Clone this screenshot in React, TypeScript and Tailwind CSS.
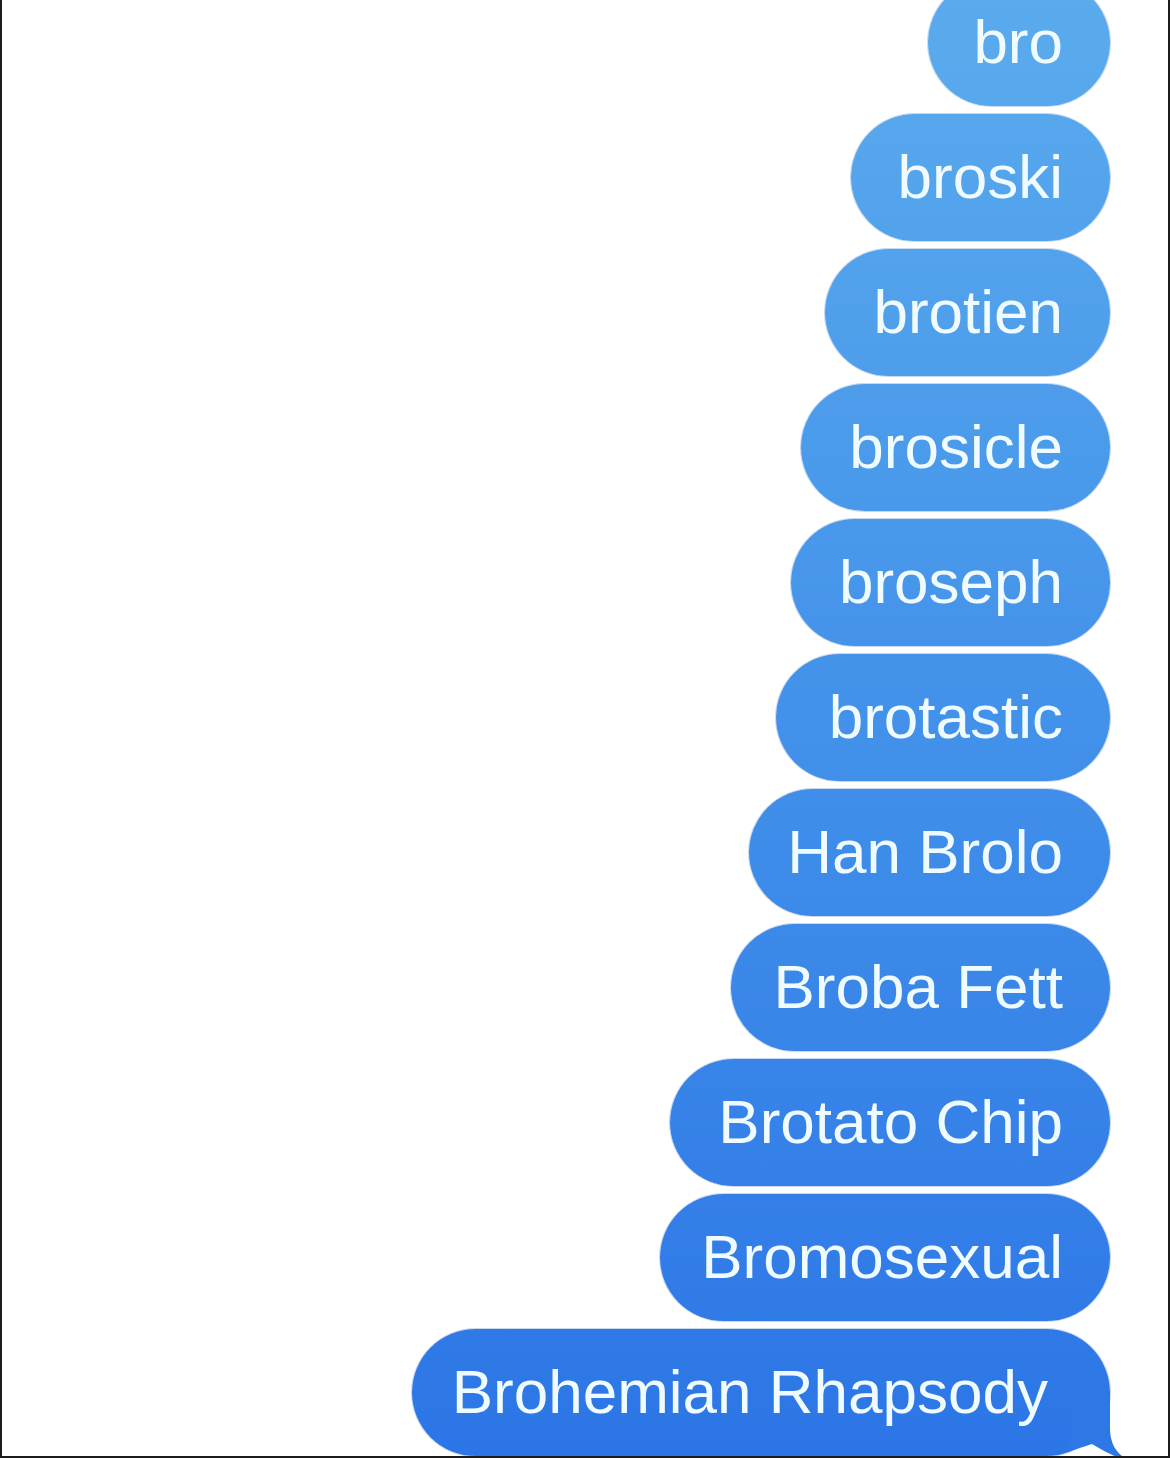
import React from "react";

const words: { t: string; w: string }[] = [
  { t: "bro", w: "w-[182px]" },
  { t: "broski", w: "w-[259px]" },
  { t: "brotien", w: "w-[285px]" },
  { t: "brosicle", w: "w-[309px]" },
  { t: "broseph", w: "w-[319px]" },
  { t: "brotastic", w: "w-[334px]" },
  { t: "Han Brolo", w: "w-[361px]" },
  { t: "Broba Fett", w: "w-[379px]" },
  { t: "Brotato Chip", w: "w-[440px]" },
  { t: "Bromosexual", w: "w-[450px]" },
];

const bubbleBase =
  "relative flex h-[127px] shrink-0 items-center justify-end whitespace-nowrap rounded-full bg-fixed bg-linear-to-b from-[#5aabed] to-[#2c75e6] text-[62px] leading-none text-[#f0fbff] shadow-[0_0_0_1px_rgba(40,100,190,0.25)]";

export default function App() {
  return (
    <div
      className="relative h-[1458px] w-[1170px] overflow-hidden border-x-2 border-b-2 border-[#1c1c1c] bg-white"
      style={{ fontFamily: '"Liberation Sans", Arial, sans-serif' }}
    >
      <div className="mt-[-21px] flex flex-col items-end gap-[8px] pr-[58px]">
        {words.map((x) => (
          <div key={x.t} className={`${bubbleBase} ${x.w} pr-[47px]`}>
            <span className="pb-[2px]">{x.t}</span>
          </div>
        ))}
        <div className={`${bubbleBase} w-[698px] pr-[62px]`}>
          <span className="pb-[2px]">Brohemian Rhapsody</span>
          <svg
            className="absolute right-[-20px] bottom-[-4px]"
            width="60"
            height="80"
            viewBox="0 0 60 80"
          >
            <path
              d="M40 12.5 L40 48 C40 62, 45 73, 58 80 C48 79, 36 72, 22 64 C15 66, 8 69, 0 71 L0 12.5 Z"
              fill="#2e77e6"
            />
          </svg>
        </div>
      </div>
    </div>
  );
}
